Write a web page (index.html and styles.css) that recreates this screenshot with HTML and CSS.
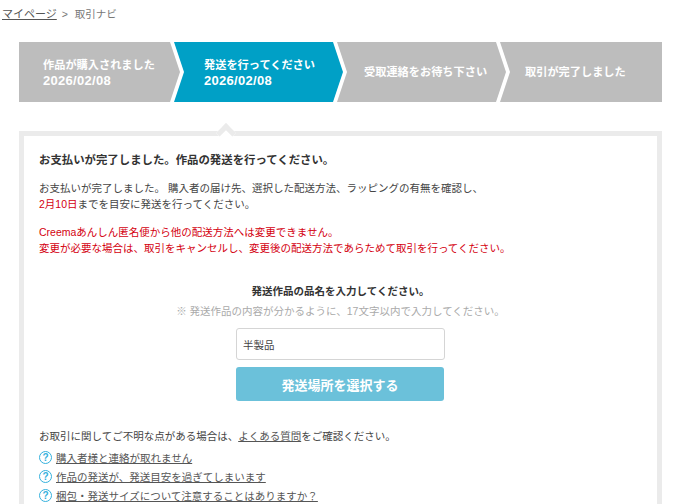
FILE: index.html
```html
<!DOCTYPE html>
<html lang="ja">
<head>
  <meta charset="UTF-8" />
  <title>取引ナビ</title>
  <link rel="stylesheet" href="styles.css">
</head>
<body>

  <div class="breadcrumb">
    <a href="#">マイページ</a>
    <span class="sep">&gt;</span>
    <span>取引ナビ</span>
  </div>

  <ol class="steps">
    <li class="step first">作品が購入されました<br><span class="step-date">2026/02/08</span></li>
    <li class="step current">発送を行ってください<br><span class="step-date">2026/02/08</span></li>
    <li class="step">受取連絡をお待ち下さい</li>
    <li class="step last">取引が完了しました</li>
  </ol>

  <div class="panel">
    <h2 class="panel-title">お支払いが完了しました。作品の発送を行ってください。</h2>
    <p class="msg">お支払いが完了しました。 購入者の届け先、選択した配送方法、ラッピングの有無を確認し、<br><span class="red">2月10日</span>までを目安に発送を行ってください。</p>
    <p class="msg red warn">Creemaあんしん匿名便から他の配送方法へは変更できません。<br>変更が必要な場合は、取引をキャンセルし、変更後の配送方法であらためて取引を行ってください。</p>

    <div class="item-form">
      <div class="form-title">発送作品の品名を入力してください。</div>
      <div class="form-note">※ 発送作品の内容が分かるように、17文字以内で入力してください。</div>
      <input class="item-input" type="text" value="半製品" />
      <button class="submit-btn">発送場所を選択する</button>
    </div>

    <p class="help-lead">お取引に関してご不明な点がある場合は、<a href="#">よくある質問</a>をご確認ください。</p>
    <ul class="faq">
      <li><span class="q-icon">?</span><a href="#">購入者様と連絡が取れません</a></li>
      <li><span class="q-icon">?</span><a href="#">作品の発送が、発送目安を過ぎてしまいます</a></li>
      <li><span class="q-icon">?</span><a href="#">梱包・発送サイズについて注意することはありますか？</a></li>
    </ul>
  </div>

</body>
</html>
```

FILE: styles.css
```css
html, body { height: 504px; overflow: hidden; }
body { background: #fff; color: #444; font-family: "Liberation Sans", "Noto Sans CJK JP", sans-serif; font-size: 10.5px; margin: 0; }
a { color: #555; }

.breadcrumb { padding: 6px 0 0 2px; height: 42px; box-sizing: border-box; line-height: 16px; color: #777; }
.breadcrumb a { font-size: 11px; }
.breadcrumb .sep { margin: 0 4px 0 2px; }

.steps { display: flex; list-style: none; margin: 0 18px 0 19px; padding: 0; height: 60px; }
.step { width: 169px; height: 60px; margin-left: -6px; padding: 15px 0 0 27px; box-sizing: border-box; background: #bdbdbd; color: #fff; font-size: 11.2px; font-weight: bold; line-height: 16px; clip-path: polygon(0 0, calc(100% - 10px) 0, 100% 50%, calc(100% - 10px) 100%, 0 100%, 10px 50%); }
.step.first { width: 161px; margin-left: 0; padding-left: 24px; clip-path: polygon(0 0, calc(100% - 10px) 0, 100% 50%, calc(100% - 10px) 100%, 0 100%); }
.step.current { background: #00a0c6; padding-left: 30px; }
.step.last { width: 162px; padding-left: 25px; clip-path: polygon(0 0, 100% 0, 100% 100%, 0 100%, 10px 50%); }
.step:nth-child(3), .step.last { display: flex; align-items: center; padding-top: 0; }
.step:nth-child(3) { padding-left: 27px; }
.step-date { font-size: 13px; letter-spacing: 0.3px; }

.panel { position: relative; margin: 29px 18px 0 19px; border: 5px solid #ebebeb; border-bottom: 0; padding: 15px 15px 0; min-height: 400px; }
.panel::before { content: ""; position: absolute; top: -10px; left: 195px; width: 14px; height: 14px; background: #fff; border-top: 5px solid #ebebeb; border-left: 5px solid #ebebeb; transform: rotate(45deg); box-sizing: border-box; }
.panel-title { font-size: 11.4px; font-weight: bold; line-height: 18px; margin: 0 0 11px; color: #333; }
.msg { margin: 0; line-height: 16px; }
.warn { margin-top: 12px; }
.red { color: #d4000f; }

.item-form { display: flex; flex-direction: column; align-items: center; margin-top: 27px; }
.form-title { font-weight: bold; line-height: 16px; color: #333; }
.form-note { color: #aaa; line-height: 16px; margin: 4px 0 9px; }
.item-input { width: 209px; height: 32px; box-sizing: border-box; border: 1px solid #d5d5d5; border-radius: 3px; padding: 0 6px; font: inherit; color: #444; background: #fff; }
.submit-btn { width: 208px; height: 34px; margin-top: 7px; margin-right: 1px; border: none; border-radius: 3px; background: #6bc1da; color: #fff; font: inherit; font-size: 13px; font-weight: bold; }

.help-lead { margin: 27px 0 0; line-height: 16px; }
.faq { list-style: none; margin: 4px 0 0; padding: 0; }
.faq li { display: flex; align-items: center; gap: 4px; height: 19px; }
.q-icon { width: 11px; height: 11px; border: 1.5px solid #35b1dd; border-radius: 50%; color: #35b1dd; font-size: 10px; font-weight: bold; line-height: 11px; text-align: center; }
```
